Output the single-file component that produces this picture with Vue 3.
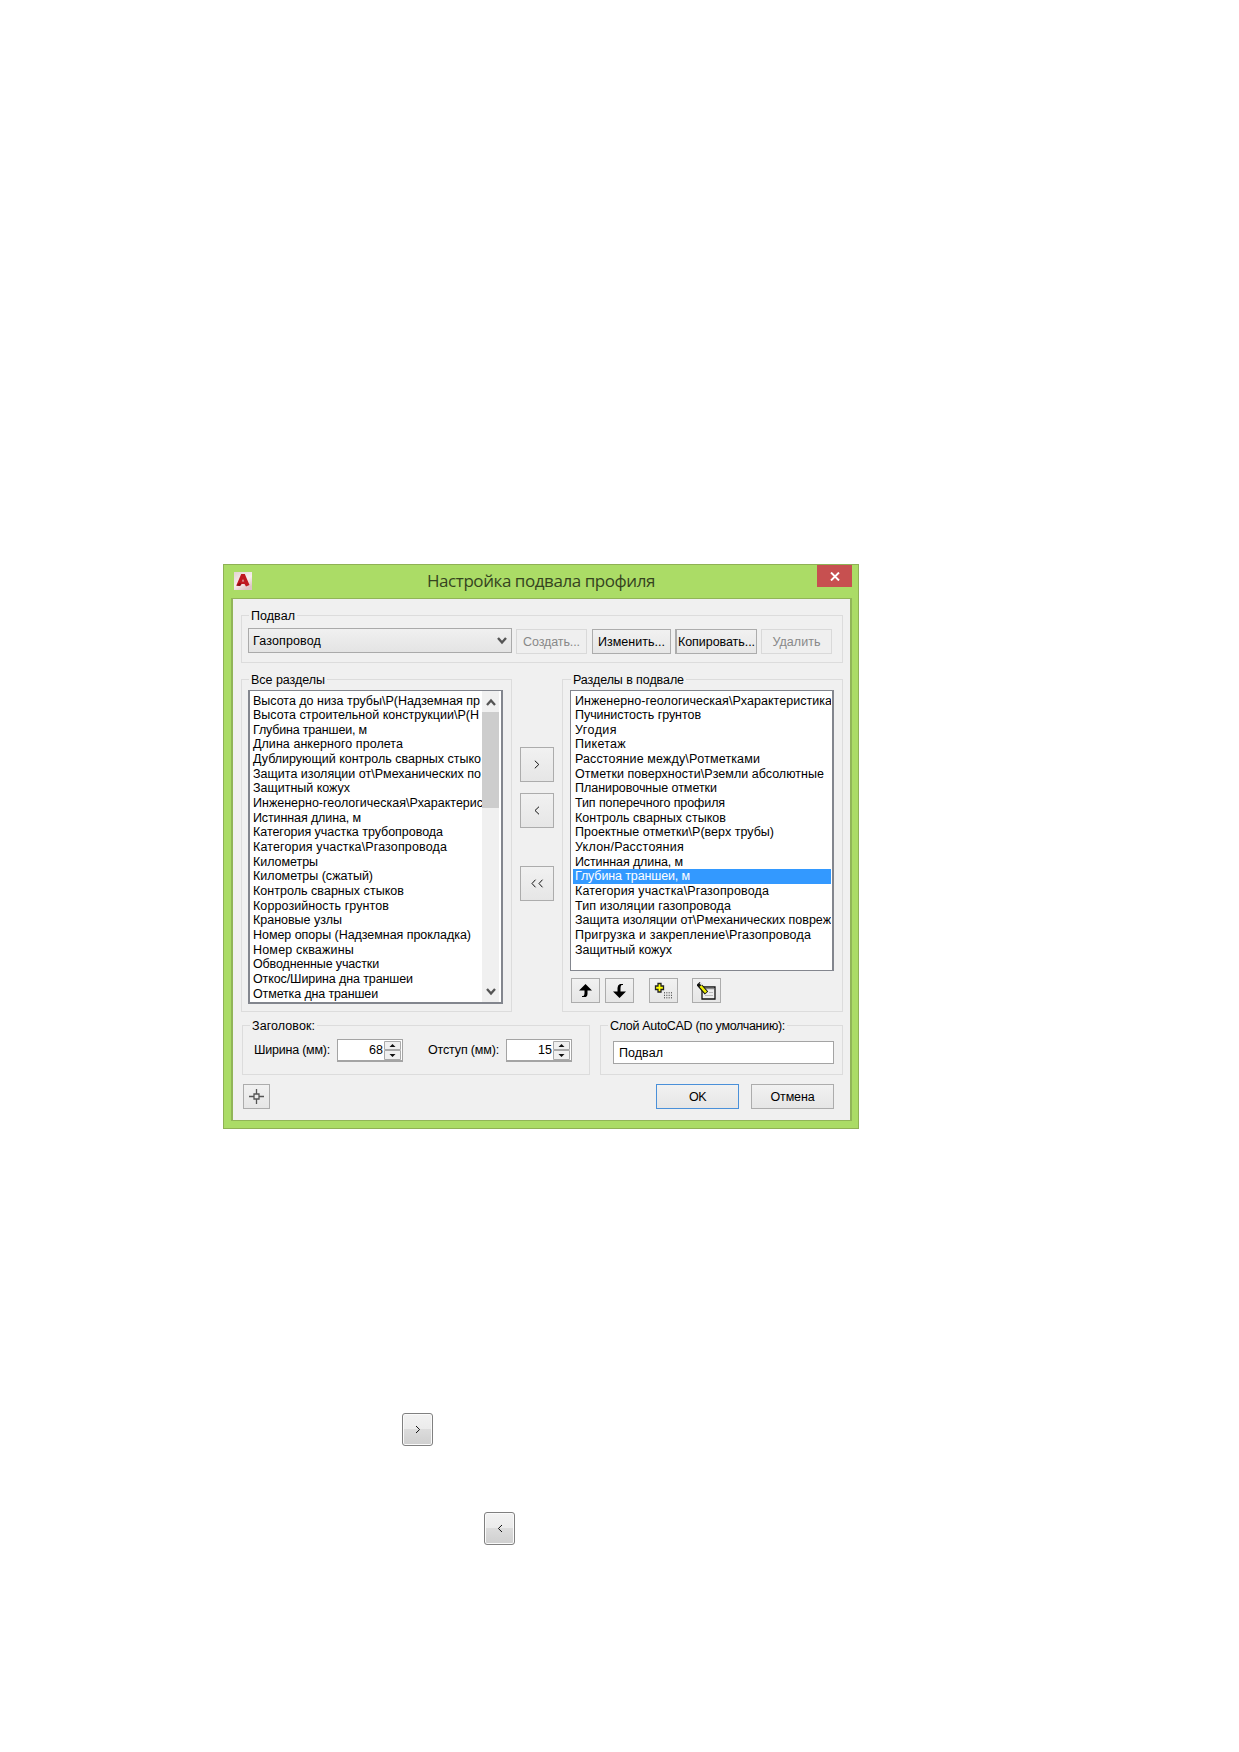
<script setup>
const left = [
  ['Высота до низа трубы\\P(Надземная пр', 227], ['Высота строительной конструкции\\P(Н', 226], ['Глубина траншеи, м', 114],
  ['Длина анкерного пролета', 150], ['Дублирующий контроль сварных стыко', 228], ['Защита изоляции от\\Pмеханических по', 228],
  ['Защитный кожух', 97], ['Инженерно-геологическая\\Pхарактерис', 230], ['Истинная длина, м', 108],
  ['Категория участка трубопровода', 190], ['Категория участка\\Pгазопровода', 194], ['Километры', 65],
  ['Километры (сжатый)', 120], ['Контроль сварных стыков', 151], ['Коррозийность грунтов', 136], ['Крановые узлы', 89],
  ['Номер опоры (Надземная прокладка)', 218], ['Номер скважины', 101], ['Обводненные участки', 126],
  ['Откос/Ширина дна траншеи', 160], ['Отметка дна траншеи', 125],
]
const right = [
  ['Инженерно-геологическая\\Pхарактеристика', 257], ['Пучинистость грунтов', 126], ['Угодия', 42], ['Пикетаж', 51],
  ['Расстояние между\\Pотметками', 185], ['Отметки поверхности\\Pземли абсолютные', 249], ['Планировочные отметки', 142],
  ['Тип поперечного профиля', 150], ['Контроль сварных стыков', 151], ['Проектные отметки\\P(верх трубы)', 199],
  ['Уклон/Расстояния', 109], ['Истинная длина, м', 108], ['Глубина траншеи, м', 115], ['Категория участка\\Pгазопровода', 194],
  ['Тип изоляции газопровода', 156], ['Защита изоляции от\\Pмеханических повреж', 256],
  ['Пригрузка и закрепление\\Pгазопровода', 236], ['Защитный кожух', 97],
]
const selected = 12

// Spreads a label's letters so that it takes the given width in pixels.
const vFit = {
  mounted(el, { value }) {
    const range = document.createRange()
    range.selectNodeContents(el)
    const w = range.getBoundingClientRect().width
    el.style.letterSpacing = (value - w) / el.textContent.trim().length + 'px'
  },
}
</script>

<template>
  <main class="page">
    <section class="window">
      <header class="titlebar">
        <svg class="logo" width="18" height="18" viewBox="0 0 18 18">
          <defs><linearGradient id="lg" x1="0" y1="0" x2="0.6" y2="1"><stop offset="0" stop-color="#e3d3d3" /><stop offset=".6" stop-color="#f8eeee" /><stop offset="1" stop-color="#dcc4c6" /></linearGradient></defs>
          <rect width="18" height="18" fill="url(#lg)" />
          <path d="M7.200 2h3.600l4.700 11-3.500 1.500-1.500-2.500H7.500L6 14 2.300 13.500z" fill="#c01820" />
          <path d="M9 7l1.200 2.600H7.800z" fill="#dba0a3" /><path d="M2.300 13.500l3.500-3 1.700 1.500L6 14z" fill="#8d1015" />
        </svg>
        <h1><span v-fit="228">Настройка подвала профиля</span></h1>
        <button class="close"><svg width="10" height="9" viewBox="0 0 10 9"><path d="M1 .5l8 8M9 .5l-8 8" stroke="#fff" stroke-width="1.9" /></svg></button>
      </header>

      <div class="client">
        <div class="group basement">
          <span class="legend"><span v-fit="44">Подвал</span></span>
          <div class="combo"><span v-fit="68">Газопровод</span>
            <svg width="10" height="8" viewBox="0 0 10 8"><path d="M1 1l4 4.5L9 1" fill="none" stroke="#555" stroke-width="2.4" /></svg>
          </div>
          <button class="btn off b1"><span v-fit="57">Создать...</span></button>
          <button class="btn b2"><span v-fit="67">Изменить...</span></button>
          <button class="btn b3"><span v-fit="77">Копировать...</span></button>
          <button class="btn off b4"><span v-fit="48">Удалить</span></button>
        </div>

        <div class="columns">
          <div class="group all">
            <span class="legend"><span v-fit="74">Все разделы</span></span>
            <div class="listbox">
              <ul><li v-for="r in left" :key="r[0]"><span v-fit="r[1]">{{ r[0] }}</span></li></ul>
              <div class="scroll">
                <svg width="10" height="8" viewBox="0 0 10 8"><path d="M1 7l4-4.5L9 7" fill="none" stroke="#555" stroke-width="2.3" /></svg>
                <i class="thumb"></i>
                <svg width="10" height="8" viewBox="0 0 10 8"><path d="M1 1l4 4.5L9 1" fill="none" stroke="#555" stroke-width="2.3" /></svg>
              </div>
            </div>
          </div>
          <div class="movers">
            <button class="btn"><svg width="6" height="9" viewBox="0 0 6 9"><path d="M.8.7l4 3.8-4 3.8" /></svg></button>
            <button class="btn"><svg width="6" height="9" viewBox="0 0 6 9"><path d="M5 .7L1 4.500l4 3.800" /></svg></button>
            <button class="btn last"><svg width="13" height="9" viewBox="0 0 13 9"><path d="M4.500 .7L1 4.500l3.500 3.800M11.500 .7L8 4.500l3.500 3.800" /></svg></button>
          </div>
          <div class="group chosen">
            <span class="legend"><span v-fit="111">Разделы в подвале</span></span>
            <div class="listbox">
              <ul><li v-for="(r, i) in right" :key="r[0]" :class="{ sel: i === selected }"><span v-fit="r[1]">{{ r[0] }}</span></li></ul>
            </div>
            <div class="tools">
              <button class="btn"><svg width="13" height="14" viewBox="0 0 13 14"><path d="M6.500 0L13 6.500H8.500V10q0 2-1.500 3H3v-1h1.500Q5.500 11 5.500 9V6.500H0z" fill="#000" /></svg></button>
              <button class="btn"><svg width="13" height="14" viewBox="0 0 13 14"><path d="M6.500 14L0 7.500h4.500V4Q4.500 1 7 0h3v1H8.500Q7.500 2 7.500 4v3.500H13z" fill="#000" /></svg></button>
              <button class="btn t3"><svg width="19" height="17" viewBox="0 0 19 17"><path d="M4 1.500h3V4h2.500v3.500H7V10H4V7.500H1.500V4H4z" fill="#ff0" stroke="#222" stroke-width="1.300" /><path d="M10 10.800h8M10 13.300h8M10 15.800h8" stroke="#333" stroke-width="1" stroke-dasharray="1 1.330" /></svg></button>
              <button class="btn t4"><svg width="19" height="18" viewBox="0 0 19 18"><path d="M5 5h13v12H5z" fill="#eee" stroke="#111" stroke-width="1.300" /><path d="M6 6.500h11" stroke="#888" stroke-width="1.500" /><path d="M12 10.500h4M8 13.500h8" stroke="#bbb" /><path d="M1 1.500L9.500 11" stroke="#111" stroke-width="4.600" /><path d="M3.500 4L9 10.300" stroke="#ee0" stroke-width="2.600" /><path d="M3 1l2 2" stroke="#ddd" stroke-width="1.500" /></svg></button>
            </div>
          </div>
        </div>

        <div class="settings">
          <div class="group heading">
            <span class="legend"><span v-fit="63">Заголовок:</span></span>
            <label class="l1"><span v-fit="76">Ширина (мм):</span></label>
            <div class="spin"><b>68</b><svg width="17" height="19" viewBox="0 0 17 19"><path d="M.5.500h16v8H.5zM.5 9.500h16v9H.5z" fill="#f0f0f0" stroke="#aaa" /><path d="M5.500 6l3-3 3 3zM5.500 13l3 3 3-3z" fill="#111" /></svg></div>
            <label class="l2"><span v-fit="71">Отступ (мм):</span></label>
            <div class="spin"><b>15</b><svg width="17" height="19" viewBox="0 0 17 19"><path d="M.5.500h16v8H.5zM.5 9.500h16v9H.5z" fill="#f0f0f0" stroke="#aaa" /><path d="M5.500 6l3-3 3 3zM5.500 13l3 3 3-3z" fill="#111" /></svg></div>
          </div>
          <div class="group layer">
            <span class="legend"><span v-fit="175">Слой AutoCAD (по умолчанию):</span></span>
            <div class="field"><span v-fit="44">Подвал</span></div>
          </div>
        </div>

        <footer>
          <button class="btn pick"><svg width="15" height="15" viewBox="0 0 15 15"><path d="M0 7.500h5M10 7.500h5M7.500 0v5M7.500 10v5M5 5h5v5H5z" fill="none" stroke="#555" stroke-width="1.300" /></svg></button>
          <button class="btn ok"><span v-fit="17">OK</span></button>
          <button class="btn cancel"><span v-fit="44">Отмена</span></button>
        </footer>
      </div>
    </section>
    <button class="sample s1"><svg width="6" height="9" viewBox="0 0 6 9"><path d="M1 1l3.600 3.500L1 8" /></svg></button>
    <button class="sample s2"><svg width="6" height="9" viewBox="0 0 6 9"><path d="M5 1L1.400 4.500 5 8" /></svg></button>
  </main>
</template>

<style>
body { background: #fff; }
</style>

<style scoped>
* { box-sizing: border-box; }
.page { width: 1239px; height: 1752px; padding-top: 564px; background: #fff; overflow: hidden; display: flex; flex-direction: column; align-items: flex-start; font: 12.5px/14px "Liberation Sans", Arial, sans-serif; color: #000; }
span { white-space: nowrap; }
svg { display: block; flex: none; }
button { font: inherit; color: inherit; padding: 0; margin: 0; }
.window { flex: none; width: 636px; height: 565px; margin-left: 223px; border: 1px solid #8fb155; background: #abdc66; padding: 0 7px; }
.titlebar { height: 33px; display: flex; align-items: flex-start; position: relative; padding-left: 3px; }
.logo { margin-top: 7px; }
h1 { margin: 4px 0 0 175px; font: 17px/24px "Open Sans", "Noto Sans", sans-serif; color: #35441f; }
.close { position: absolute; right: -1px; top: 0; width: 35px; height: 22px; border: 0; background: #c75050; display: flex; align-items: center; justify-content: center; }
.client { width: 621px; height: 523px; border: 1px solid #91b558; border-width: 1px 2px 1px 2px; background: #f0f0f0; padding: 16px 7px 0 8px; }
.group { position: relative; border: 1px solid #dcdcdc; display: flex; flex: none; }
.legend { position: absolute; top: -7px; left: 7px; padding: 0 2px; background: #f0f0f0; height: 14px; }
.basement { width: 602px; height: 48px; padding: 12px 0 0 6px; }
.combo { width: 264px; height: 25px; border: 1px solid #aaa; background: linear-gradient(#f0f0f0, #e4e4e4); display: flex; align-items: center; justify-content: space-between; padding: 0 4px; }
.btn { border: 1px solid #acacac; background: linear-gradient(#f1f1f1, #e6e6e6); display: flex; align-items: center; justify-content: center; height: 25px; flex: none; }
.off { border-color: #d9d9d9; background: #efefef; color: #888; }
.b1 { width: 71px; margin: 1px 5px 0 4px; }
.b2 { width: 79px; margin: 1px 4px 0 0; }
.b3 { width: 82px; margin: 1px 4px 0 0; border-left-width: 2px; }
.b4 { width: 71px; margin-top: 1px; }
.columns { display: flex; margin-top: 16px; }
.all { width: 271px; height: 333px; padding: 10px 0 0 6px; }
.listbox { border: 2px solid #83868e; border-top-width: 1px; background: #fff; display: flex; overflow: hidden; }
.all .listbox { width: 255px; height: 314px; }
ul { margin: 0; padding: 2.5px 0 0; list-style: none; flex: 1; min-width: 0; overflow: hidden; }
li { height: 14.67px; line-height: 14.67px; padding-left: 3px; overflow: hidden; white-space: nowrap; }
.scroll { width: 19px; border-right: 2px solid #fff; background: #f0f0f0; display: flex; flex-direction: column; align-items: center; padding: 7px 0 6px; }
.thumb { width: 17px; height: 96px; background: #cdcdcd; margin: 6px 0 auto; }
.movers { width: 50px; padding: 68px 0 0 8px; }
.movers .btn { width: 34px; height: 35px; margin-bottom: 11px; }
.movers .last { margin-top: 38px; }
.movers path, .sample path { fill: none; stroke: #111; stroke-width: 1; }
.chosen { width: 281px; height: 333px; padding: 10px 0 0 7px; flex-direction: column; }
.chosen .legend { left: 8px; }
.chosen .listbox { width: 264px; height: 281px; border-width: 1px 2px 1px 1px; }
.chosen ul { padding: 2.5px 1px 0 2px; }
.chosen li { padding-left: 2px; }
.sel { background: #3399ff; color: #fff; }
.tools { display: flex; margin: 7px 0 0 1px; }
.tools .btn { width: 29px; margin-right: 5px; }
.tools .t3 { margin: 0 14px 0 10px; }
.settings { display: flex; margin: 13px 0 0 1px; gap: 10px; }
.heading { width: 348px; height: 50px; padding: 13px 0 0 11px; }
.l1 { width: 83px; padding-top: 4px; }
.l2 { width: 78px; margin-left: 25px; padding-top: 4px; }
.spin { width: 66px; height: 23px; background: #fff; border: 1px solid #a4a4a4; border-bottom-width: 2px; display: flex; justify-content: flex-end; align-items: center; padding-right: 1px; }
.spin b { font-weight: 400; margin-right: 1px; }
.layer { width: 243px; height: 50px; padding: 15px 0 0 12px; }
.field { width: 221px; height: 23px; background: #fff; border: 1px solid #a4a4a4; padding: 4px 5px; }
footer { display: flex; margin: 9px 0 0 2px; }
.pick { width: 27px; }
.ok { width: 83px; margin-left: 386px; border-color: #4a90d9; }
.cancel { width: 83px; margin-left: 12px; }
.sample { flex: none; width: 31px; height: 33px; border: 1px solid #808080; border-radius: 3px; box-shadow: inset 0 0 0 1px #fafafa; background: linear-gradient(#f2f2f2 0, #ebebeb 48%, #dcdcdc 50%, #cfcfcf); display: flex; align-items: center; justify-content: center; }
.s1 { margin: 284px 0 0 402px; }
.s2 { margin: 66px 0 0 484px; }
</style>
